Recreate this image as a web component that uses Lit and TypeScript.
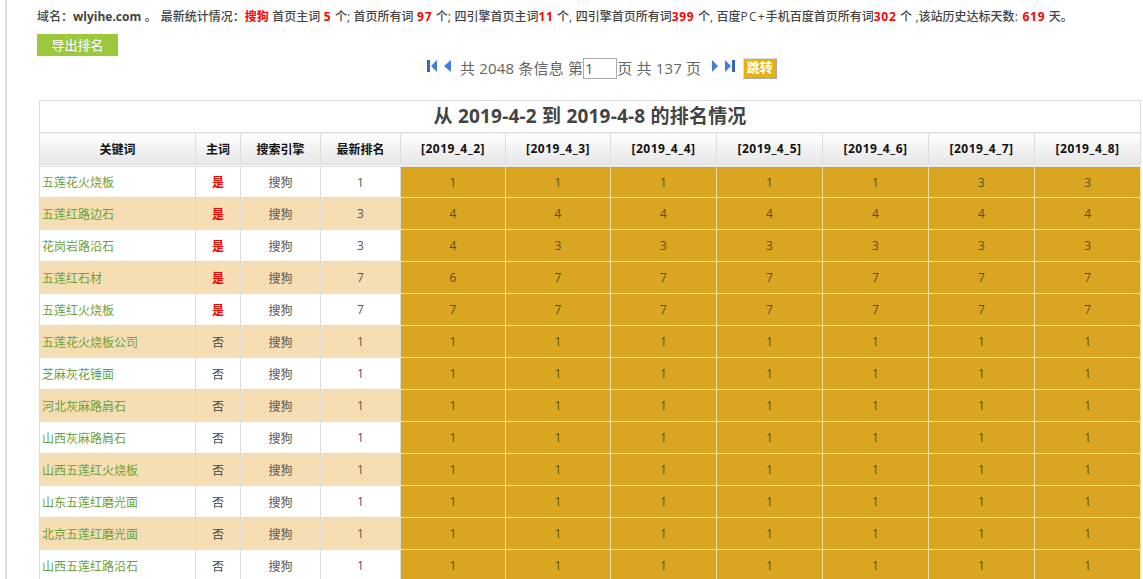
import { LitElement, html, svg, css } from 'lit';
import { customElement } from 'lit/decorators.js';

const DATES = ['2019_4_2', '2019_4_3', '2019_4_4', '2019_4_5', '2019_4_6', '2019_4_7', '2019_4_8'];
const COLS = [156, 45, 80, 80, 105, 105, 106, 106, 106, 106, 106];

const ones = [1, 1, 1, 1, 1, 1, 1];
const ROWS: [string, boolean, number, number[]][] = [
  ['五莲花火烧板', true, 1, [1, 1, 1, 1, 1, 3, 3]],
  ['五莲红路边石', true, 3, [4, 4, 4, 4, 4, 4, 4]],
  ['花岗岩路沿石', true, 3, [4, 3, 3, 3, 3, 3, 3]],
  ['五莲红石材', true, 7, [6, 7, 7, 7, 7, 7, 7]],
  ['五莲红火烧板', true, 7, [7, 7, 7, 7, 7, 7, 7]],
  ['五莲花火烧板公司', false, 1, ones],
  ['芝麻灰花锤面', false, 1, ones],
  ['河北灰麻路肩石', false, 1, ones],
  ['山西灰麻路肩石', false, 1, ones],
  ['山西五莲红火烧板', false, 1, ones],
  ['山东五莲红磨光面', false, 1, ones],
  ['北京五莲红磨光面', false, 1, ones],
  ['山西五莲红路沿石', false, 1, ones],
];

@customElement('app-root')
export class AppRoot extends LitElement {
  static styles = css`
    :host {
      display: block;
      height: 579px;
      overflow: hidden;
      font-family: 'Open Sans', 'Noto Sans CJK SC', sans-serif;
      color: #555;
    }
    .page {
      margin-left: 5px;
      border-left: 2px solid #ddd;
      padding-left: 30px;
      height: 579px;
    }
    .stats {
      height: 34px;
      line-height: 33px;
      font-size: 12px;
      font-weight: 500;
      word-spacing: 0.4px;
      color: #444;
      white-space: nowrap;
    }
    .stats strong {
      font-weight: 700;
    }
    .stats b {
      color: #f00;
      font-weight: 700;
    }
    .stats .n {
      letter-spacing: 0.7px;
    }
    .stats .wide {
      letter-spacing: 1.2px;
    }
    .gap {
      display: inline-block;
      width: 4px;
    }
    .export {
      display: block;
      width: 81px;
      height: 22px;
      line-height: 22px;
      text-align: center;
      font-size: 13px;
      color: #fff;
      background: #9bc83c;
    }
    .pager {
      display: flex;
      align-items: center;
      height: 24px;
      margin-left: 390px;
      font-size: 15px;
      color: #666;
      white-space: nowrap;
    }
    .pager span {
      margin-top: -2px;
      letter-spacing: 0.18px;
    }
    .pager svg {
      display: block;
      flex: none;
      margin-top: -4px;
    }
    .first {
      margin-right: 7px;
    }
    .prev {
      margin-right: 9px;
    }
    .next {
      margin-left: 11px;
      margin-right: 7px;
    }
    .pager input {
      box-sizing: border-box;
      flex: none;
      width: 34px;
      height: 21px;
      margin-top: 1px;
      padding: 0 1px;
      border: 1px solid #aaa;
      font: inherit;
      font-size: 14px;
      color: #555;
      outline: none;
    }
    .go {
      box-sizing: border-box;
      flex: none;
      width: 34px;
      height: 21px;
      margin: 1px 0 0 8px;
      line-height: 17px;
      text-align: center;
      font-size: 13px;
      font-weight: 700;
      color: #fff;
      background: #e6b30c;
      border: 1px solid #ddd;
      border-right: 2px solid #aaa;
      border-bottom: 2px solid #aaa;
    }
    table {
      border-collapse: collapse;
      table-layout: fixed;
      width: 1101px;
      margin: 20px 0 0 2px;
      font-size: 12px;
    }
    th,
    td {
      box-sizing: border-box;
      border: 1px solid #ddd;
      height: 32px;
      padding: 0;
      text-align: center;
      font-weight: 400;
    }
    th.title {
      padding-bottom: 3px;
      font-size: 19px;
      font-weight: 700;
      letter-spacing: 0.2px;
      color: #444;
      background: #fff;
    }
    .heads th {
      height: 33px;
      font-weight: 700;
      color: #111;
      background: linear-gradient(#fff, #e6e6e6);
      border-bottom: 3px double #ddd;
    }
    .heads th.date {
      letter-spacing: 0.5px;
    }
    tr.even td {
      background: #f5deb3;
    }
    td.kw {
      padding-left: 2px;
      text-align: left;
      color: #6aa23c;
    }
    td.main {
      color: #444;
    }
    td.main.yes {
      color: #f00;
      font-weight: 700;
    }
    tr td.rank,
    tr.even td.rank {
      background: #daa520;
      color: #574f24;
      border-color: #f0dfa8;
    }
  `;

  render() {
    return html`
      <div class="page">
        <div class="stats">
          域名：<strong>wlyihe.com</strong> 。<span class="gap"></span>最新统计情况：<b>搜狗</b> 首页主词 <b class="n">5</b> 个; 首页所有词 <b class="n">97</b> 个; 四引擎首页主词<b class="n">11</b> 个, 四引擎首页所有词<b class="n">399</b> 个, 百度<span class="wide">PC+</span>手机百度首页所有词<b class="n">302</b> 个 ,该站历史达标天数<span class="wide">:</span> <b class="n">619</b> 天。
        </div>
        <a class="export">导出排名</a>
        <div class="pager">
          ${this.icon('first', 'M10 0 V12 L4 6 Z', 'M0 0 H3 V12 H0 Z', 10)}
          ${this.icon('prev', 'M7 0 V12 L0 6 Z', '', 7)}
          <span>共 2048 条信息 第</span><input value="1" /><span>页 共 137 页</span>
          ${this.icon('next', 'M0 0 V12 L6 6 Z', '', 6)}
          ${this.icon('last', 'M0 0 V12 L6 6 Z', 'M7 0 H10 V12 H7 Z', 10)}
          <div class="go">跳转</div>
        </div>
        <table>
          <colgroup>${COLS.map((w) => html`<col style="width:${w}px" />`)}</colgroup>
          <tr><th class="title" colspan="11">从 2019-4-2 到 2019-4-8 的排名情况</th></tr>
          <tr class="heads">
            <th>关键词</th><th>主词</th><th>搜索引擎</th><th>最新排名</th>
            ${DATES.map((d) => html`<th class="date">[${d}]</th>`)}
          </tr>
          ${ROWS.map(
            ([kw, main, latest, ranks], i) => html`
              <tr class=${i % 2 ? 'even' : ''}>
                <td class="kw">${kw}</td>
                <td class="main ${main ? 'yes' : ''}">${main ? '是' : '否'}</td>
                <td>搜狗</td>
                <td>${latest}</td>
                ${ranks.map((r) => html`<td class="rank">${r}</td>`)}
              </tr>
            `
          )}
        </table>
      </div>
    `;
  }

  icon(cls: string, tri: string, bar: string, w: number) {
    return html`<svg class=${cls} width=${w} height="12" viewBox="0 0 ${w} 12">
      <path d=${tri} fill="#3d7fe0"></path>
      ${bar ? svg`<path d=${bar} fill="#3566b8"></path>` : ''}
    </svg>`;
  }
}
